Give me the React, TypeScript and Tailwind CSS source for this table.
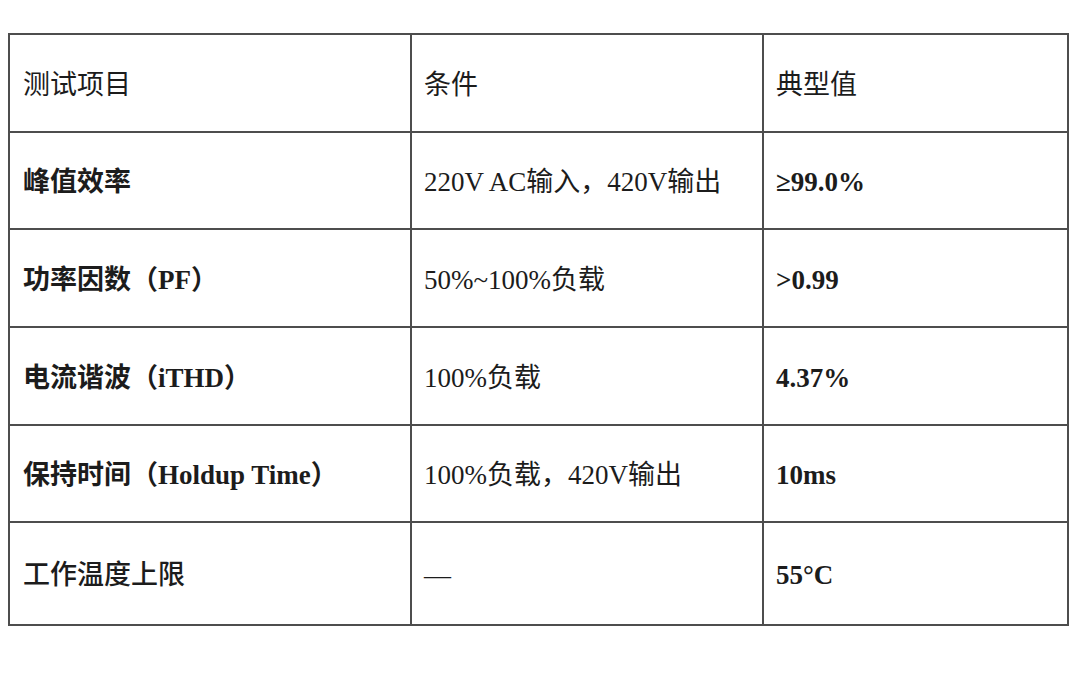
const rows: { item: string; cond: string; value: string; itemBold: boolean; h: string }[] = [
  { item: '峰值效率', cond: '220V AC输入，420V输出', value: '≥99.0%', itemBold: true, h: 'h-[97px]' },
  { item: '功率因数（PF）', cond: '50%~100%负载', value: '>0.99', itemBold: true, h: 'h-[98px]' },
  { item: '电流谐波（iTHD）', cond: '100%负载', value: '4.37%', itemBold: true, h: 'h-[98px]' },
  { item: '保持时间（Holdup Time）', cond: '100%负载，420V输出', value: '10ms', itemBold: true, h: 'h-[97px]' },
  { item: '工作温度上限', cond: '—', value: '55°C', itemBold: false, h: 'h-[103px]' },
];

export default function App() {
  return (
    <div className="min-h-[674px] w-[1080px] bg-white pt-[33px] pl-[8px] font-['Liberation_Serif','Noto_Sans_CJK_SC',serif] text-[27px] text-[#1c1c1c]">
      <table className="w-[1059px] table-fixed border-collapse">
        <colgroup>
          <col className="w-[402px]" />
          <col className="w-[352px]" />
          <col className="w-[305px]" />
        </colgroup>
        <tbody>
          <tr className="h-[98px]">
            <td className="border-2 border-[#4d4d4d] pt-[4px] pl-[13px] align-middle">测试项目</td>
            <td className="border-2 border-[#4d4d4d] pt-[4px] pl-[12px] align-middle">条件</td>
            <td className="border-2 border-[#4d4d4d] pt-[4px] pl-[12px] align-middle">典型值</td>
          </tr>
          {rows.map((r) => (
            <tr key={r.item} className={r.h}>
              <td className={`border-2 border-[#4d4d4d] pt-[4px] pl-[13px] align-middle ${r.itemBold ? 'font-bold' : 'font-medium'}`}>
                {r.item}
              </td>
              <td className="border-2 border-[#4d4d4d] pt-[4px] pl-[12px] align-middle">{r.cond}</td>
              <td className="border-2 border-[#4d4d4d] pt-[4px] pl-[12px] align-middle font-bold">{r.value}</td>
            </tr>
          ))}
        </tbody>
      </table>
    </div>
  );
}
